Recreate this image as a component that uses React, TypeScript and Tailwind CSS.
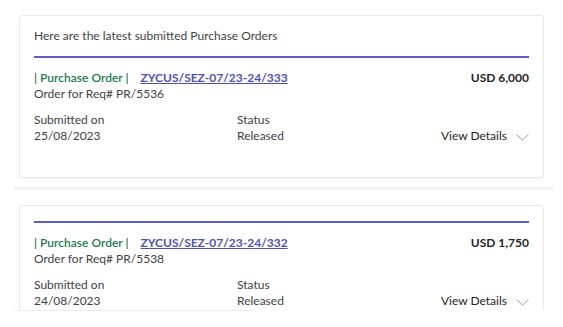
import React from 'react';

interface PurchaseOrder {
  number: string;
  req: string;
  amount: string;
  submitted: string;
  status: string;
}

const orders: PurchaseOrder[] = [
  { number: 'ZYCUS/SEZ-07/23-24/333', req: 'PR/5536', amount: 'USD 6,000', submitted: '25/08/2023', status: 'Released' },
  { number: 'ZYCUS/SEZ-07/23-24/332', req: 'PR/5538', amount: 'USD 1,750', submitted: '24/08/2023', status: 'Released' },
];

const Chevron = () => (
  <svg width="13" height="7" viewBox="0 0 13 7" fill="none" className="ml-[9px] mt-[2px]">
    <path d="M0.5 0.5 L6.5 6 L12.5 0.5" stroke="#a0a0a0" strokeWidth="1" />
  </svg>
);

const OrderBody: React.FC<{ order: PurchaseOrder }> = ({ order }) => (
  <div>
    <div className="h-[2px] bg-[#5b5fc7]" />
    <div className="mt-[12px] flex items-start justify-between">
      <div className="flex items-center">
        <span className="font-semibold text-[#237b4b]">| Purchase Order |</span>
        <a className="ml-[12px] font-bold text-[#4f52b2] underline">{order.number}</a>
      </div>
      <span className="font-bold text-[#242424]">{order.amount}</span>
    </div>
    <div>Order for Req# {order.req}</div>
    <div className="mt-[10px] flex items-end">
      <div className="w-[203px]">
        <div>Submitted on</div>
        <div>{order.submitted}</div>
      </div>
      <div className="flex-1">
        <div>Status</div>
        <div>{order.status}</div>
      </div>
      <div className="flex items-center text-[#242424]">
        View Details
        <Chevron />
      </div>
    </div>
  </div>
);

export default function App() {
  return (
    <div className="relative h-[327px] w-[563px] overflow-hidden bg-white font-['Segoe_UI','Lato','Noto_Sans',sans-serif] text-[12px] leading-[16px] text-[#424242]">
      <div className="pt-[15px]">
        <div className="mx-[19px] h-[163px] rounded-[3px] border border-[#e8e8e8] px-[14px] pt-[12px] shadow-[0_1px_2px_rgba(0,0,0,0.04)]">
          <div className="mb-[12px]">Here are the latest submitted Purchase Orders</div>
          <OrderBody order={orders[0]} />
        </div>
        <div className="ml-[14px] mr-[10px] mt-[9px] h-[3px] bg-[#f2f2f2]" />
        <div className="mx-[19px] mt-[15px] h-[200px] rounded-[3px] border border-[#e8e8e8] px-[14px] pt-[15px]">
          <OrderBody order={orders[1]} />
        </div>
      </div>
      <div className="absolute bottom-0 left-0 right-0 h-[17px] bg-white">
        <div className="ml-[14px] h-px w-[238px] rounded-tr-[4px] bg-[#ececec]" />
      </div>
    </div>
  );
}
